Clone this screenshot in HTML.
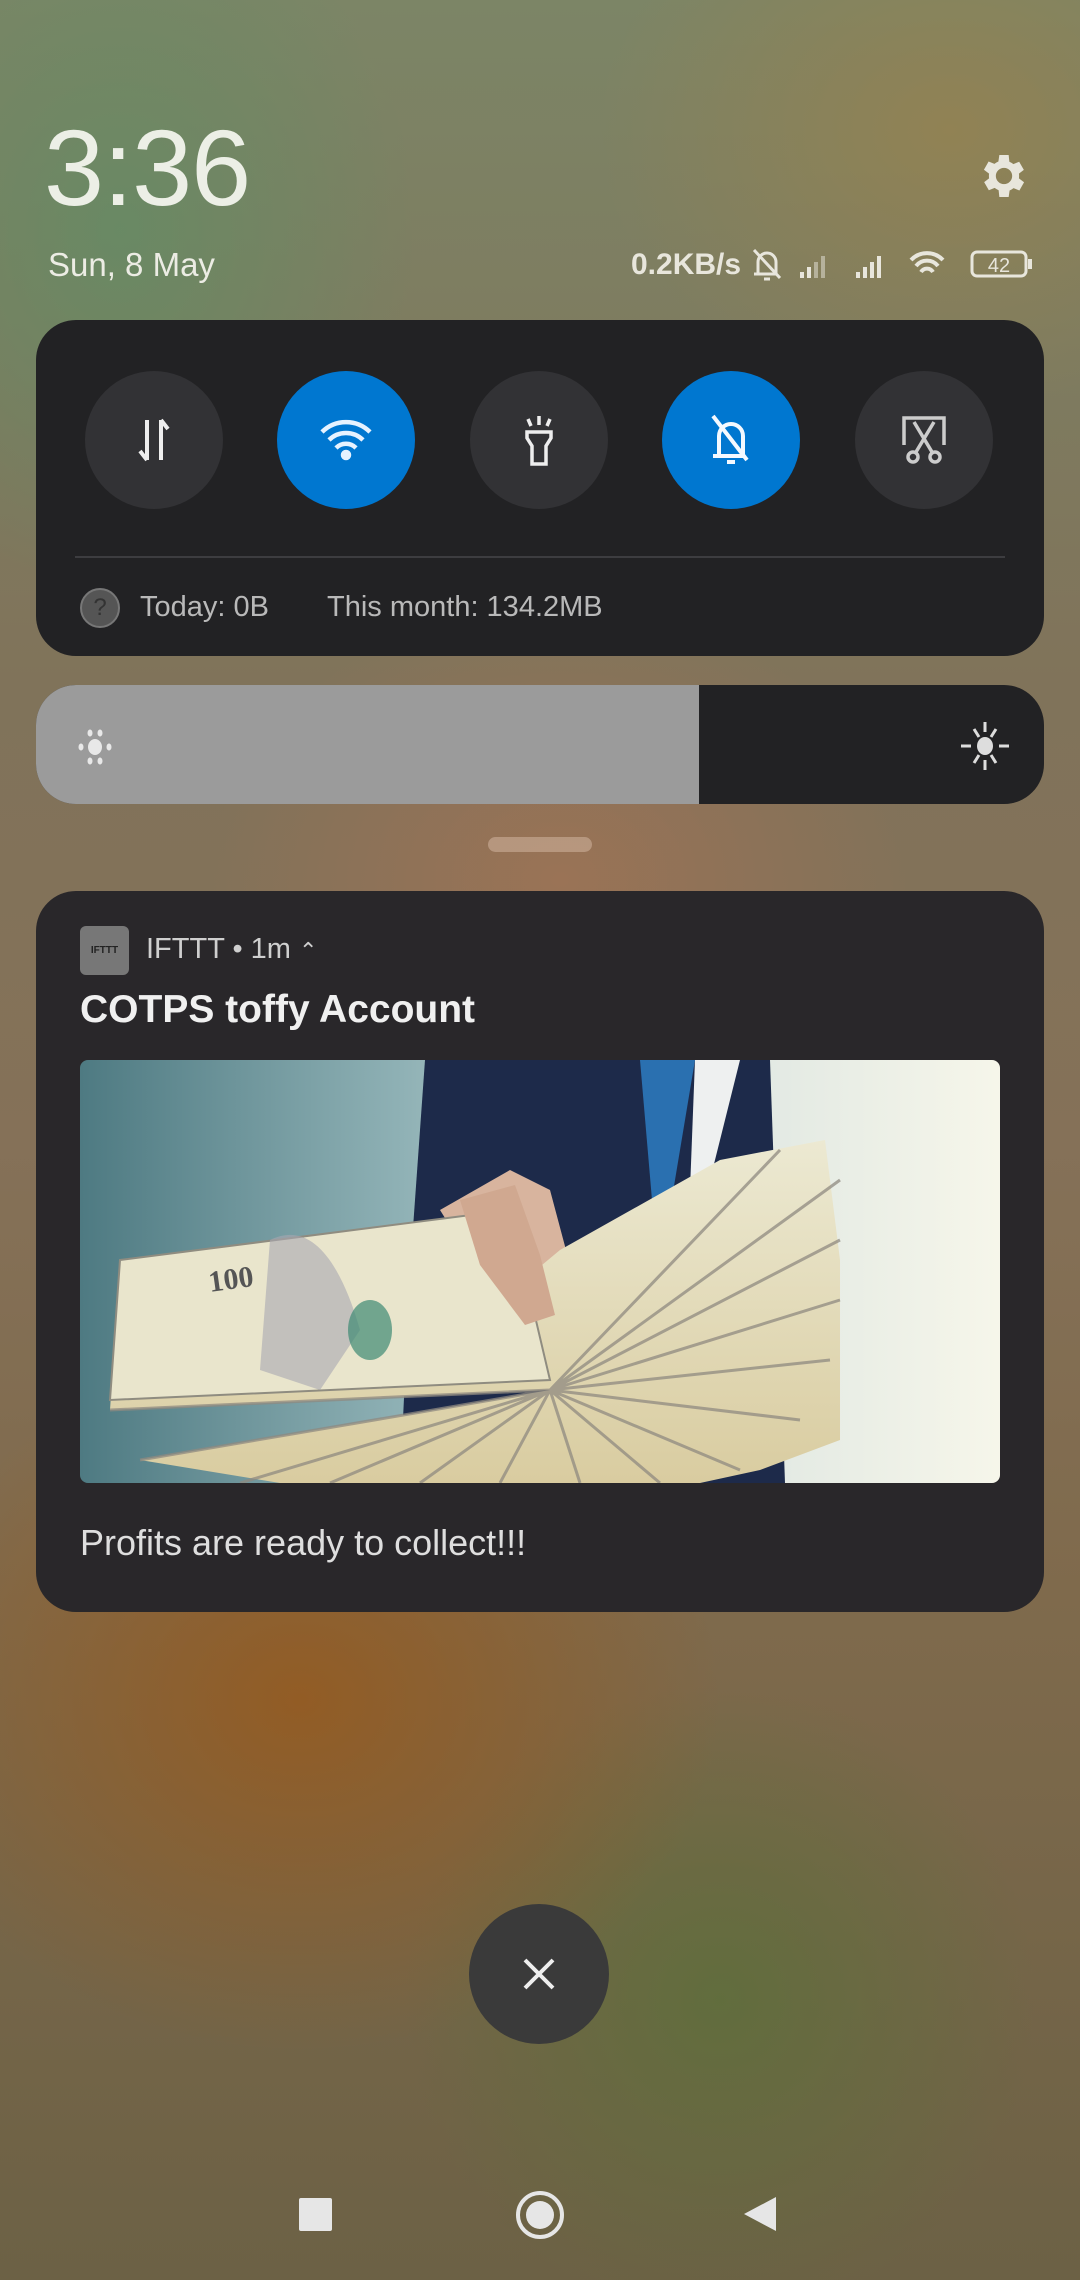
<!DOCTYPE html>
<html><head><meta charset="utf-8"><style>
*{margin:0;padding:0;box-sizing:border-box}
body{width:1080px;height:2280px;overflow:hidden;font-family:"Liberation Sans",sans-serif;position:relative;
background:
radial-gradient(ellipse 420px 520px at 120px 230px,rgba(100,140,100,.8),transparent 70%),
radial-gradient(ellipse 500px 400px at 560px 880px,rgba(160,115,85,.8),transparent 70%),
radial-gradient(ellipse 600px 500px at 300px 1700px,rgba(150,90,30,.85),transparent 70%),
radial-gradient(ellipse 450px 450px at 720px 2000px,rgba(95,110,60,.9),transparent 70%),
radial-gradient(ellipse 500px 400px at 950px 130px,rgba(150,130,80,.8),transparent 70%),
linear-gradient(180deg,#7c8566 0%,#80735a 30%,#857158 50%,#7f6a4c 70%,#6c6145 100%);}
.abs{position:absolute}
.time{left:44px;top:114px;font-size:108px;color:#ecefe6;letter-spacing:-1px;line-height:1}
.date{left:48px;top:246px;font-size:33px;color:#ecece4}
.panel{left:36px;width:1008px;background:#222224;border-radius:40px}
.btn{width:138px;height:138px;border-radius:50%;top:371px;background:#323235;display:flex;align-items:center;justify-content:center}
.blue{background:#0077d0}
.t{color:#b9b9b9;font-size:29px}
</style></head><body>
<div class="abs time">3:36</div>
<div class="abs date">Sun, 8 May</div>
<svg class="abs" style="left:976px;top:148px" width="56" height="56" viewBox="0 0 24 24"><path fill="#e8e6dc" d="M19.4 13a7.5 7.5 0 0 0 0-2l2.1-1.6-2-3.5-2.5 1a7.4 7.4 0 0 0-1.7-1L15 3h-4l-.4 2.8a7.4 7.4 0 0 0-1.7 1l-2.5-1-2 3.5L6.6 11a7.5 7.5 0 0 0 0 2l-2.1 1.6 2 3.5 2.5-1a7.4 7.4 0 0 0 1.7 1L11 21h4l.4-2.8a7.4 7.4 0 0 0 1.7-1l2.5 1 2-3.5zM13 15.5a3.5 3.5 0 1 1 0-7 3.5 3.5 0 0 1 0 7z" transform="translate(-1 0)"/></svg>
<div class="abs" style="left:631px;top:248px;font-size:30px;font-weight:bold;color:#e8e6dc">0.2KB/s</div>
<svg class="abs" style="left:750px;top:244px" width="290" height="40" viewBox="0 0 290 40">
<g fill="none" stroke="#e8e6dc" stroke-width="3"><path d="M8 30V18a9 9 0 0 1 18 0v12H4M14 35h6M4 6l26 28"/></g>
<g fill="#e8e6dc"><rect x="50" y="28" width="4" height="6"/><rect x="57" y="23" width="4" height="11"/><rect x="64" y="18" width="4" height="16" opacity=".5"/><rect x="71" y="12" width="4" height="22" opacity=".5"/>
<rect x="106" y="28" width="4" height="6"/><rect x="113" y="23" width="4" height="11"/><rect x="120" y="18" width="4" height="16"/><rect x="127" y="12" width="4" height="22"/></g>
<g fill="none" stroke="#e8e6dc" stroke-width="4"><path d="M161 16a22 22 0 0 1 32 0M166 22a14 14 0 0 1 22 0M171 28a7 7 0 0 1 12 0"/></g>
<rect x="222" y="8" width="54" height="24" rx="5" fill="none" stroke="#e8e6dc" stroke-width="3"/><rect x="278" y="15" width="4" height="10" fill="#e8e6dc"/>
<text x="249" y="28" font-size="20" fill="#e8e6dc" text-anchor="middle" font-family="Liberation Sans">42</text></svg>

<div class="abs panel" style="top:320px;height:336px"></div>
<div class="abs btn" style="left:85px"><svg width="50" height="60" viewBox="0 0 50 60" fill="none" stroke="#eee" stroke-width="4"><path d="M18 10v40M18 50l-7-9M32 50V10M32 10l7 9"/></svg></div>
<div class="abs btn blue" style="left:277px"><svg width="60" height="50" viewBox="0 0 60 50" fill="none" stroke="#e6f2ff" stroke-width="4.5"><path d="M6 17a34 34 0 0 1 48 0M13 25a24 24 0 0 1 34 0M20 33a14 14 0 0 1 20 0"/><circle cx="30" cy="40" r="3" fill="#e6f2ff"/></svg></div>
<div class="abs btn" style="left:470px"><svg width="50" height="60" viewBox="0 0 50 60" fill="none" stroke="#eee" stroke-width="3.5"><path d="M13 22h24v6l-5 8v18H18V36l-5-8zM25 6v9M14 9l3 7M36 9l-3 7"/></svg></div>
<div class="abs btn blue" style="left:662px"><svg width="56" height="60" viewBox="0 0 56 60" fill="none" stroke="#f4f9ff" stroke-width="4"><path d="M16 46V26a12 12 0 0 1 24 0v20H10M24 52h8M10 6l34 44"/></svg></div>
<div class="abs btn" style="left:855px"><svg width="56" height="60" viewBox="0 0 56 60" fill="none" stroke="#ccc" stroke-width="3.5"><path d="M8 35V8h40v27M18 12l18 30M38 12L20 42"/><circle cx="17" cy="47" r="5"/><circle cx="39" cy="47" r="5"/></svg></div>
<div class="abs" style="left:75px;top:556px;width:930px;height:2px;background:#3d3d40"></div>
<div class="abs" style="left:80px;top:588px;width:40px;height:40px;border-radius:50%;background:#555;border:2px solid #777;color:#333;font-size:24px;text-align:center;line-height:36px">?</div>
<div class="abs t" style="left:140px;top:591px">Today: 0B</div>
<div class="abs t" style="left:327px;top:591px">This month: 134.2MB</div>

<div class="abs" style="left:36px;top:685px;width:1008px;height:119px;border-radius:40px;overflow:hidden;background:#222224"><div style="width:663px;height:100%;background:#9b9b9b"></div></div>
<svg class="abs" style="left:70px;top:722px" width="50" height="50" viewBox="0 0 50 50" fill="#e8e8e8"><ellipse cx="25" cy="25" rx="7" ry="8"/><ellipse cx="20" cy="11" rx="2.5" ry="3.5"/><ellipse cx="30" cy="11" rx="2.5" ry="3.5"/><ellipse cx="20" cy="39" rx="2.5" ry="3.5"/><ellipse cx="30" cy="39" rx="2.5" ry="3.5"/><ellipse cx="11" cy="25" rx="2.5" ry="3.5"/><ellipse cx="39" cy="25" rx="2.5" ry="3.5"/></svg>
<svg class="abs" style="left:955px;top:716px" width="60" height="60" viewBox="0 0 60 60" stroke="#ddd" stroke-width="3" fill="#ddd"><ellipse cx="30" cy="30" rx="8" ry="9" stroke="none"/><path d="M30 6v10M30 44v10M6 30h10M44 30h10M19 13l5 8M41 13l-5 8M19 47l5-8M41 47l-5-8" fill="none"/></svg>
<div class="abs" style="left:488px;top:837px;width:104px;height:15px;border-radius:8px;background:rgba(210,180,160,.55)"></div>

<div class="abs panel" style="top:891px;height:721px;background:#29272a"></div>
<div class="abs" style="left:80px;top:926px;width:49px;height:49px;border-radius:6px;background:#777;color:#222;font-size:10px;font-weight:bold;text-align:center;line-height:49px">IFTTT</div>
<div class="abs" style="left:146px;top:933px;font-size:29px;color:#cfcfcf">IFTTT • 1m <span style="font-size:22px">⌃</span></div>
<div class="abs" style="left:80px;top:988px;font-size:39px;font-weight:bold;color:#f0f0f0">COTPS toffy Account</div>
<svg class="abs" style="left:80px;top:1060px;border-radius:8px" width="920" height="423" viewBox="0 0 920 423">
<defs><linearGradient id="bg" x1="0" x2="1"><stop offset="0" stop-color="#4e7a82"/><stop offset=".35" stop-color="#8fb1b5"/><stop offset=".7" stop-color="#dfe7e2"/><stop offset="1" stop-color="#f6f6ea"/></linearGradient>
<linearGradient id="bv" x1="0" y1="0" x2="0" y2="1"><stop offset="0" stop-color="#ece9d2"/><stop offset="1" stop-color="#d9cca0"/></linearGradient></defs>
<rect width="920" height="423" fill="url(#bg)"/>
<path d="M345 0H690L705 423H320L330 210z" fill="#1d2a4a"/>
<path d="M560 0h55l-25 150-18-10z" fill="#2a70b0"/><path d="M615 0h45l-30 120-20 10z" fill="#eef0f0"/>
<path d="M360 150l70-40 40 20 40 150-40 30-60-80z" fill="#d8b49e"/>
<path d="M470 330L30 350 40 200 420 240 480 190 640 100 745 80 760 200 760 380 680 410 620 423 200 423 60 400z" fill="url(#bv)"/>
<g stroke="#8f8a80" stroke-width="3" fill="none" opacity=".75"><path d="M470 330L760 120M470 330L760 180M470 330L760 240M470 330L750 300M470 330L720 360M470 330L660 410M470 330L580 423M470 330L500 423M470 330L420 423M470 330L340 423M470 330L250 423M470 330L160 423M470 330L60 400M470 330L30 350M470 330L700 90"/></g>
<path d="M40 200L430 150 470 320 30 340z" fill="#e9e5cc" stroke="#8f8c80" stroke-width="2"/>
<path d="M190 180c40-20 70 20 90 90l-40 60-60-20z" fill="#a8a6b0" opacity=".6"/>
<ellipse cx="290" cy="270" rx="22" ry="30" fill="#3d8a74" opacity=".7"/>
<text x="130" y="232" font-size="30" font-weight="bold" fill="#555" transform="rotate(-8 130 232)" font-family="Liberation Serif">100</text>
<path d="M380 140l55-15 25 70 15 60-30 10-45-60z" fill="#d0a890"/>
</svg>
<div class="abs" style="left:80px;top:1522px;font-size:36px;color:#dedede">Profits are ready to collect!!!</div>

<div class="abs" style="left:469px;top:1904px;width:140px;height:140px;border-radius:50%;background:#3a3a3a;display:flex;align-items:center;justify-content:center"><svg width="40" height="40" viewBox="0 0 40 40" stroke="#eee" stroke-width="4"><path d="M6 6l28 28M34 6L6 34"/></svg></div>
<div class="abs" style="left:299px;top:2198px;width:33px;height:33px;background:#e6e6e6;border-radius:2px"></div>
<div class="abs" style="left:516px;top:2191px;width:48px;height:48px;border-radius:50%;border:4px solid #e6e6e6"><div style="margin:6px;width:28px;height:28px;border-radius:50%;background:#e6e6e6"></div></div>
<svg class="abs" style="left:742px;top:2195px" width="36" height="38" viewBox="0 0 36 38"><path d="M34 2v34L2 19z" fill="#e6e6e6"/></svg>
</body></html>
